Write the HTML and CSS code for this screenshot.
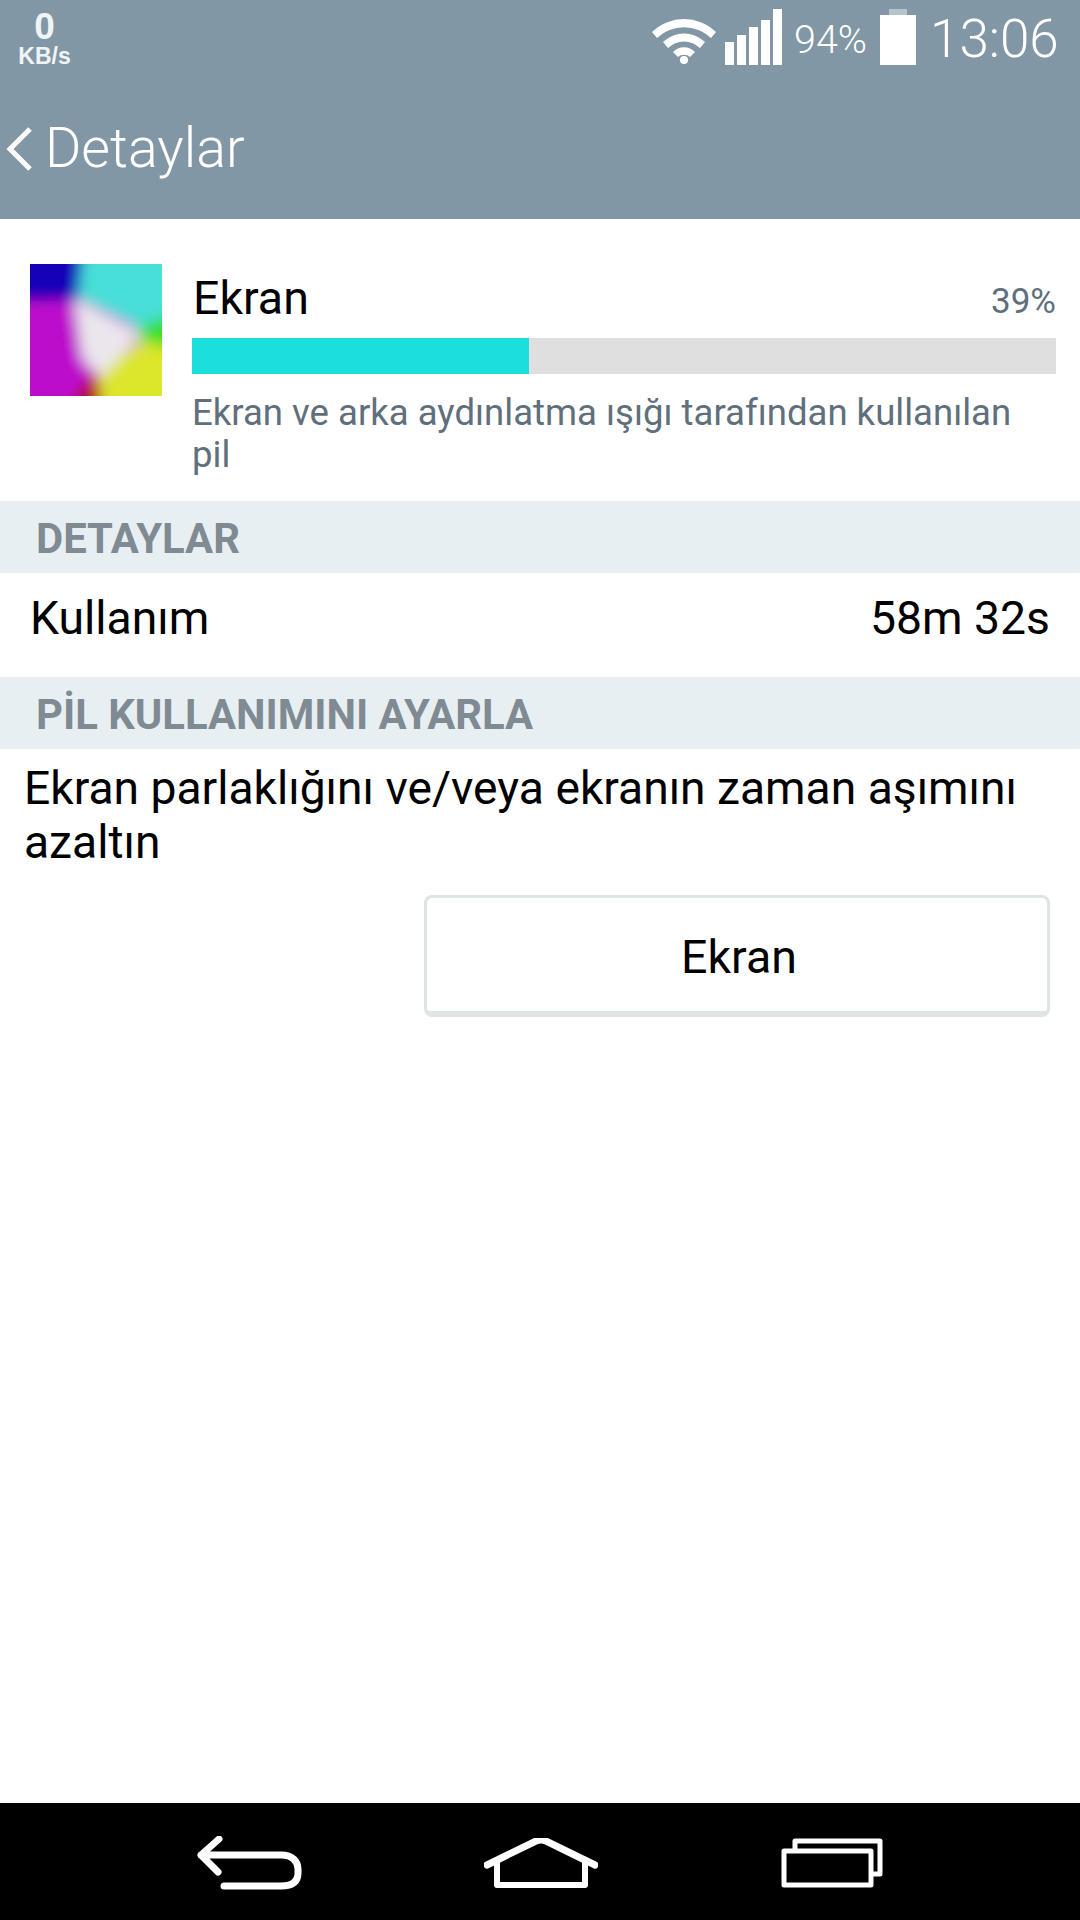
FILE: index.html
```html
<!DOCTYPE html>
<html lang="tr">
<head>
  <meta charset="UTF-8" />
  <title>Detaylar</title>
  <link rel="stylesheet" href="styles.css">
</head>
<body>
  <div class="app">
    <header class="top">
      <div class="status">
        <div class="speed">
          <span class="speed-num">0</span>
          <span class="speed-unit">KB/s</span>
        </div>
        <svg class="wifi" viewBox="0 0 64 48">
          <path d="M0 16 A46 46 0 0 1 64 16 L59 22 A39 39 0 0 0 5 22 Z" fill="#fff"/>
          <path d="M11 26 A30 30 0 0 1 53 26 L48 32 A23 23 0 0 0 16 32 Z" fill="#fff"/>
          <path d="M21 36 A15 15 0 0 1 43 36 L38 41 A9 9 0 0 0 26 41 Z" fill="#fff"/>
          <circle cx="32" cy="44" r="4" fill="#fff"/>
        </svg>
        <div class="signal">
          <i class="b1"></i><i class="b2"></i><i class="b3"></i><i class="b4"></i><i class="b5"></i>
        </div>
        <span class="pct">94%</span>
        <div class="battery"><i></i><b></b></div>
        <span class="clock">13:06</span>
      </div>
      <div class="titlebar">
        <svg class="chev" viewBox="0 0 28 46">
          <path d="M25 3 L5 23 L25 43" fill="none" stroke="#fff" stroke-width="5"/>
        </svg>
        <span class="title">Detaylar</span>
      </div>
    </header>

    <main class="content">
      <section class="summary">
        <svg class="thumb" viewBox="0 0 132 132">
          <defs>
            <filter id="soft" x="-20%" y="-20%" width="140%" height="140%">
              <feGaussianBlur stdDeviation="7"/>
            </filter>
          </defs>
          <g filter="url(#soft)">
            <rect x="-20" y="-20" width="172" height="172" fill="#bd0ccc"/>
            <polygon points="-20,-20 54,-20 50,36 -20,38" fill="#1200b8"/>
            <polygon points="54,-20 152,-20 152,52 114,66 48,34" fill="#46dfd8"/>
            <polygon points="152,44 152,100 116,84 104,66" fill="#38e02a"/>
            <polygon points="114,76 152,90 152,152 72,152 68,106" fill="#dce62c"/>
            <polygon points="30,152 74,152 66,106" fill="#b20f12"/>
            <polygon points="44,34 112,70 70,114 52,94" fill="#ebe6ee"/>
          </g>
        </svg>
        <div class="summary-body">
          <div class="summary-head">
            <span class="summary-name">Ekran</span>
            <span class="summary-pct">39%</span>
          </div>
          <div class="bar"><div class="bar-fill" style="width: 39%"></div></div>
          <p class="summary-desc">Ekran ve arka aydınlatma ışığı tarafından kullanılan pil</p>
        </div>
      </section>

      <h2 class="section">DETAYLAR</h2>
      <div class="row">
        <span>Kullanım</span>
        <span>58m 32s</span>
      </div>

      <h2 class="section">PİL KULLANIMINI AYARLA</h2>
      <p class="advice">Ekran parlaklığını ve/veya ekranın zaman aşımını azaltın</p>
      <div class="actions">
        <button class="btn">Ekran</button>
      </div>
    </main>

    <nav class="navbar">
      <svg class="nav-back" viewBox="0 0 106 54">
        <path d="M22 3 L4 19 L21 36 M4 19 H84 C96 19 101 26 101 33 V37 C101 45 96 50 84 50 H27" fill="none" stroke="#fff" stroke-width="7" stroke-linecap="round" stroke-linejoin="round"/>
      </svg>
      <svg class="nav-home" viewBox="0 0 114 50">
        <path d="M3 27 L52 3 Q57 1 62 3 L111 27" fill="none" stroke="#fff" stroke-width="7" stroke-linecap="round"/>
        <path d="M13 24 V47 H101 V24" fill="none" stroke="#fff" stroke-width="6" stroke-linejoin="round"/>
      </svg>
      <svg class="nav-recent" viewBox="0 0 102 50">
        <path d="M14 12 V3 H99 V36 H91" fill="none" stroke="#fff" stroke-width="5" stroke-linejoin="round"/>
        <rect x="3" y="13" width="87" height="34" fill="none" stroke="#fff" stroke-width="5" stroke-linejoin="round"/>
      </svg>
    </nav>
  </div>
</body>
</html>
```

FILE: styles.css
```css
* {
  box-sizing: border-box;
}

body {
  margin: 0;
  background: #fff;
  color: #000;
  font-family: Roboto, sans-serif;
}

.app {
  display: flex;
  flex-direction: column;
  width: 1080px;
  height: 1920px;
  overflow: hidden;
}

/* top bar */
.top {
  height: 219px;
  background: #8197a5;
  color: #fff;
}

.status {
  display: flex;
  align-items: flex-start;
  height: 78px;
  padding-left: 18px;
}

.speed {
  display: flex;
  flex-direction: column;
  align-items: center;
  width: 53px;
  margin-top: 9px;
  margin-right: 581px;
  font-family: "Liberation Sans", sans-serif;
  font-weight: 700;
  color: #f1f4f5;
}

.speed-num {
  font-size: 37px;
  line-height: 36px;
}

.speed-unit {
  font-size: 23px;
  line-height: 22px;
}

.wifi {
  width: 64px;
  height: 48px;
  margin-top: 16px;
  margin-right: 9px;
}

.signal {
  display: flex;
  align-items: flex-end;
  gap: 3px;
  height: 56px;
  margin-top: 9px;
  margin-right: 12px;
}

.signal i {
  display: block;
  width: 9px;
  background: #fff;
}

.b1 { height: 23px; }
.b2 { height: 30px; }
.b3 { height: 38px; }
.b4 { height: 45px; }
.b5 { height: 56px; }

.pct {
  margin-top: 18px;
  margin-right: 13px;
  font-size: 39.5px;
  line-height: 44px;
  font-weight: 300;
}

.battery {
  display: flex;
  flex-direction: column;
  align-items: center;
  width: 36px;
  margin-top: 9px;
  margin-right: 14px;
}

.battery i {
  display: block;
  width: 18px;
  height: 6px;
  background: #b5c3cc;
}

.battery b {
  display: block;
  width: 36px;
  height: 50px;
  background: #fff;
}

.clock {
  margin-top: 8px;
  font-size: 53px;
  line-height: 62px;
  font-weight: 300;
}

.titlebar {
  display: flex;
  align-items: center;
  height: 141px;
  padding-left: 5px;
}

.chev {
  width: 28px;
  height: 46px;
  margin-right: 12px;
}

.title {
  font-size: 55.5px;
  font-weight: 300;
}

/* page content */
.content {
  flex: 1;
}

.summary {
  display: flex;
  height: 282px;
  padding: 45px 24px 0 30px;
}

.thumb {
  flex: none;
  width: 132px;
  height: 132px;
  margin-right: 30px;
}

.summary-body {
  flex: 1;
}

.summary-head {
  display: flex;
  justify-content: space-between;
  align-items: flex-end;
  height: 72px;
  padding-bottom: 14px;
}

.summary-name {
  padding-left: 1px;
  font-size: 46.5px;
  line-height: 48px;
}

.summary-pct {
  font-size: 35px;
  line-height: 40px;
  color: #5f6f7b;
}

.bar {
  height: 36px;
  margin-top: 2px;
  background: #dfdfdf;
}

.bar-fill {
  height: 100%;
  background: #1cdedd;
}

.summary-desc {
  margin: 18px 0 0;
  padding-right: 30px;
  font-size: 36.55px;
  line-height: 42px;
  color: #5f6f7b;
}

.section {
  height: 72px;
  margin: 0;
  padding-left: 36px;
  background: #e8eff2;
  color: #7f8a92;
  font-size: 41.8px;
  font-weight: 700;
  line-height: 76px;
}

.row {
  display: flex;
  justify-content: space-between;
  height: 104px;
  padding: 0 30px;
  font-size: 46.3px;
  line-height: 90px;
}

.advice {
  margin: 12px 0 0;
  padding: 0 40px 0 24px;
  font-size: 46.2px;
  line-height: 54px;
}

.actions {
  display: flex;
  justify-content: flex-end;
  margin-top: 26px;
  padding-right: 30px;
}

.btn {
  width: 626px;
  height: 122px;
  padding: 5px 0 0 4px;
  background: #fff;
  border: 3px solid #dfe4e4;
  border-bottom-width: 6px;
  border-radius: 8px;
  color: #000;
  font-family: inherit;
  font-size: 46.5px;
}

/* bottom nav */
.navbar {
  position: relative;
  height: 117px;
  background: #000;
}

.navbar svg {
  position: absolute;
}

.nav-back {
  left: 197px;
  top: 33px;
  width: 106px;
  height: 54px;
}

.nav-home {
  left: 484px;
  top: 35px;
  width: 114px;
  height: 50px;
}

.nav-recent {
  left: 781px;
  top: 35px;
  width: 102px;
  height: 50px;
}
```
